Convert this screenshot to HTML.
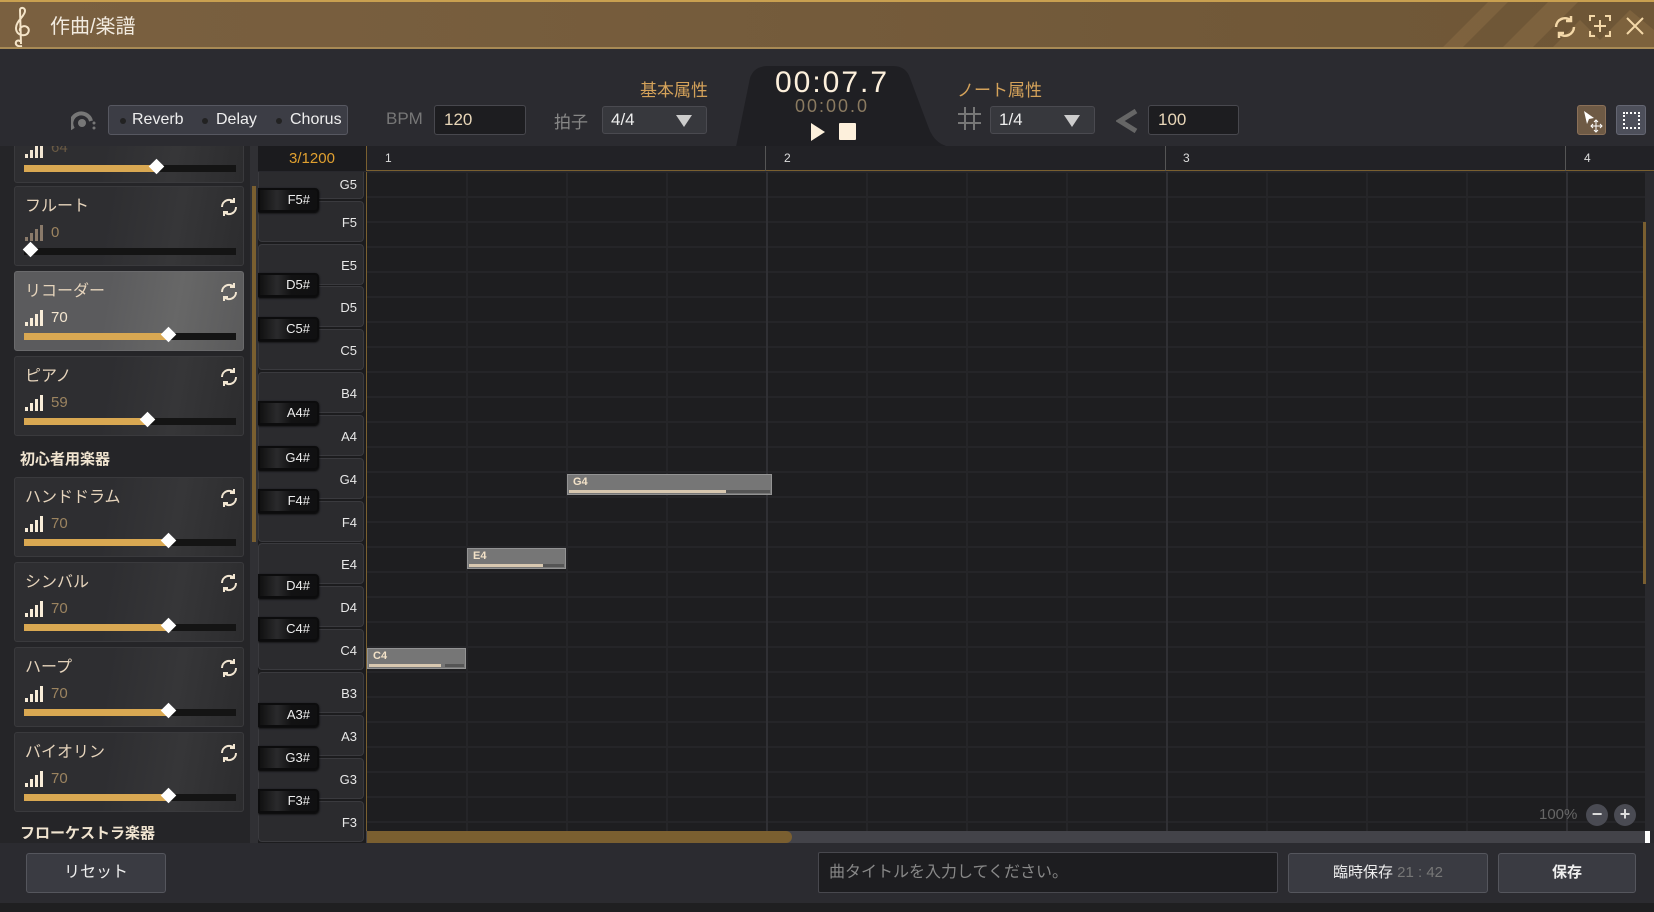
<!DOCTYPE html>
<html><head><meta charset="utf-8">
<style>
*{box-sizing:border-box;margin:0;padding:0}
body{width:1654px;height:912px;overflow:hidden;background:#28282d;font-family:"Liberation Sans","Noto Sans CJK JP",sans-serif;position:relative;color:#ddd}
.a{position:absolute}
.title{left:0;top:0;width:1654px;height:49px;background:linear-gradient(90deg,#7a6040,#735a3a 60%,#6e5636);border-top:2px solid #c9a050;border-bottom:2px solid #a88a55;overflow:hidden}
.tb{left:0;top:49px;width:1654px;height:97px;background:#2b2b30}
.lbl{font-size:17px;color:#d4a25a}
.inp{background:#1d1d20;border:1px solid #48484e;border-radius:3px;color:#e8d6b8;font-size:17px;padding-left:9px;line-height:28px}
.sel{background:#37383d;border:1px solid #4a4a50;border-radius:3px;color:#eee;font-size:17px;padding-left:8px;line-height:26px}
.tri{width:0;height:0;border-left:8px solid transparent;border-right:8px solid transparent;border-top:12px solid #ccc}
.card{left:14px;width:230px;height:80px;background:linear-gradient(100deg,#2e2e31 40%,#363638 70%,#2c2c2e);border:1px solid #3a3a3d;border-radius:3px}
.card.hl{background:linear-gradient(100deg,#5b5b5d 40%,#676767 70%,#5a5a5b);border-color:#6a6a6c}
.nm{left:10px;top:5px;font-size:16px;color:#e6d4bc}
.val{left:36px;top:37px;font-size:15px;color:#9c8460}
.hl .val{color:#f4e6d0}
.trk{left:9px;top:61px;width:212px;height:7px;background:#141414}
.fill{left:0;top:0;height:7px;background:#d9a852}
.dm{top:-4px;width:11px;height:11px;background:#fff;transform:rotate(45deg)}
.sig{left:10px;top:38px}
.rf{left:204px;top:10px}
.hdr{left:20px;font-size:15px;color:#f0e4d0;font-weight:bold}
.wk{left:258px;width:106px;background:#2b2b2e;border:1px solid #3a3a3e;border-radius:4px;color:#e8e8e8;font-size:13px;text-align:right;padding-right:6px}
.bk{left:258px;width:61px;height:24px;background:linear-gradient(90deg,#111 0,#2a2a2c 30%,#121213 55%,#101011);border:2px solid #0c0c0d;border-radius:0 4px 4px 0;color:#eee;font-size:13px;text-align:right;padding-right:7px;line-height:20px;box-shadow:0 1px 2px #000}
.note{height:21px;background:#767676;border:1px solid #939393;color:#f3e2c8;font-size:11px;font-weight:bold;padding-left:5px;line-height:15px}
.note i{position:absolute;left:1px;bottom:1px;height:3px;background:#d8c8b0}
.note b{position:absolute;right:1px;bottom:1px;height:3px;background:#555}
.btn{background:#3a3b42;border:1px solid #55565d;border-radius:3px;color:#eee;font-size:16px;text-align:center}
</style></head><body>

<svg width="0" height="0" style="position:absolute">
<defs>
<g id="sg"><rect x="0" y="12" width="3" height="4"/><rect x="5" y="8" width="3" height="8"/><rect x="10" y="4" width="3" height="12"/><rect x="15" y="0" width="3" height="16"/></g>
<g id="rfi" fill="none" stroke="#f2e6d2" stroke-width="2"><path d="M3 10a7 7 0 0 1 12-5M17 10a7 7 0 0 1-12 5"/><path d="M15 1v4h-4M5 19v-4h4"/></g>
</defs></svg>

<div class="a title">
  <svg class="a" style="left:1380px;top:-2px" width="274" height="50"><g fill="#8a6c44" opacity=".55"><polygon points="60,50 110,0 130,0 80,50"/><polygon points="120,50 170,0 200,0 150,50"/><polygon points="170,50 200,20 230,50"/><polygon points="210,50 250,10 274,30 274,50"/></g></svg>
  <svg class="a" style="left:8px;top:4px" width="26" height="42" viewBox="0 0 26 42"><path d="M14 40c-4 1-7-1-6-4 1-2 4-2 4 0M13 38L12 4c0-3 5-3 5 1 0 5-9 10-9 17 0 5 4 8 9 7 4-1 5-6 2-8-3-2-8 0-7 4" fill="none" stroke="#f4e4c8" stroke-width="2"/></svg>
  <div class="a" style="left:50px;top:8px;font-size:20px;color:#f2ebe0">作曲/楽譜</div>
  <svg class="a" style="left:1552px;top:12px" width="26" height="26" viewBox="0 0 26 26" fill="none" stroke="#f4d8a8" stroke-width="2.5"><path d="M4 13a9 9 0 0 1 15-6.5M22 13a9 9 0 0 1-15 6.5"/><path d="M19 2v5h-5M7 24v-5h5"/></svg>
  <svg class="a" style="left:1589px;top:13px" width="22" height="22" viewBox="0 0 22 22" fill="none" stroke="#f4d8a8" stroke-width="2"><path d="M1 6V1h5M16 1h5v5M21 16v5h-5M6 21H1v-5M11 5v12M5 11h12"/></svg>
  <svg class="a" style="left:1625px;top:14px" width="20" height="20" viewBox="0 0 20 20" stroke="#f4d8a8" stroke-width="2"><path d="M2 2l16 16M18 2L2 18"/></svg>
</div>

<div class="a tb"></div>
<svg class="a" style="left:728px;top:66px" width="226" height="81"><path d="M8 81 L22 12 Q26 0 40 0 H165 Q178 0 182 12 L200 60 Q207 81 226 81 Z" fill="#1f1f23"/></svg>
<div class="a" style="left:760px;top:66px;width:144px;text-align:center;font-size:30px;color:#fdf0dc;letter-spacing:2px">00:07.7</div>
<div class="a" style="left:765px;top:96px;width:134px;text-align:center;font-size:18px;color:#8a7a60;letter-spacing:2px">00:00.0</div>
<svg class="a" style="left:811px;top:123px" width="14" height="18"><polygon points="0,0 14,9 0,18" fill="#fdf0dc"/></svg>
<div class="a" style="left:839px;top:123px;width:17px;height:17px;background:#fdf0dc;border-radius:1px"></div>

<svg class="a" style="left:71px;top:111px" width="26" height="20" viewBox="0 0 26 20"><path d="M2 18A10 10 0 1 1 20 10" fill="none" stroke="#777" stroke-width="4"/><circle cx="11" cy="12" r="4" fill="#777"/><circle cx="23" cy="12" r="1.5" fill="#777"/><circle cx="23" cy="17" r="1.5" fill="#777"/></svg>
<div class="a" style="left:108px;top:105px;width:240px;height:30px;background:#3c3d45;border:1px solid #575861;border-radius:3px;font-size:16px;color:#eee;line-height:28px">
  <span class="a" style="left:11px;top:12px;width:6px;height:6px;border-radius:3px;background:#222"></span><span class="a" style="left:23px">Reverb</span>
  <span class="a" style="left:93px;top:12px;width:6px;height:6px;border-radius:3px;background:#222"></span><span class="a" style="left:107px">Delay</span>
  <span class="a" style="left:167px;top:12px;width:6px;height:6px;border-radius:3px;background:#222"></span><span class="a" style="left:181px">Chorus</span>
</div>
<div class="a" style="left:386px;top:109px;font-size:17px;color:#777">BPM</div>
<div class="a inp" style="left:434px;top:105px;width:92px;height:30px">120</div>
<div class="a" style="left:554px;top:108px;font-size:17px;color:#888">拍子</div>
<div class="a sel" style="left:602px;top:106px;width:105px;height:28px">4/4<div class="a tri" style="left:73px;top:8px"></div></div>
<div class="a lbl" style="left:640px;top:76px">基本属性</div>

<div class="a lbl" style="left:957px;top:76px">ノート属性</div>
<svg class="a" style="left:958px;top:107px" width="23" height="23" stroke="#777" stroke-width="2"><path d="M7 0v23M16 0v23M0 7h23M0 16h23"/></svg>
<div class="a sel" style="left:990px;top:106px;width:105px;height:28px">1/4<div class="a tri" style="left:73px;top:8px"></div></div>
<svg class="a" style="left:1116px;top:109px" width="22" height="24"><path d="M20 2L4 12l16 10" fill="none" stroke="#666" stroke-width="5"/></svg>
<div class="a inp" style="left:1148px;top:105px;width:91px;height:30px">100</div>
<div class="a" style="left:1577px;top:105px;width:29px;height:30px;background:#6e5a45;border:1px solid #8a7058;border-radius:3px">
  <svg class="a" style="left:3px;top:3px" width="24" height="24"><polygon points="3,2 13,9 8,10 6,15" fill="#fff"/><path d="M15 11v11M10 17h11M13 13l2-2 2 2M13 21l2 2 2-2M12 15l-2 2 2 2M19 15l2 2-2 2" fill="none" stroke="#fff" stroke-width="1"/></svg>
</div>
<div class="a" style="left:1616px;top:105px;width:30px;height:30px;background:#4d4f5a;border:1px solid #646672;border-radius:3px">
  <div class="a" style="left:6px;top:6px;width:17px;height:17px;border:2px dotted #fff"></div>
</div>

<!-- left panel -->
<div class="a" style="left:0;top:146px;width:250px;height:697px;background:#252528;overflow:hidden">
<div class="a card" style="top:-43px"><div class="a trk"><div class="a fill" style="width:132px"></div><div class="a dm" style="left:127px"></div></div>
 <svg class="a sig" width="18" height="16" style="top:38px" fill="#f2e6d2"><use href="#sg"/></svg>
 <div class="a val" style="top:35px;color:#6a5a44">64</div></div>
<div class="a card" style="top:40px"><div class="a nm">フルート</div><div class="a val">0</div>
 <svg class="a sig" width="18" height="16" fill="#8a7a6a"><use href="#sg"/></svg><svg class="a rf" width="20" height="20"><use href="#rfi"/></svg>
 <div class="a trk"><div class="a dm" style="left:1px"></div></div></div>
<div class="a card hl" style="top:125px"><div class="a nm">リコーダー</div><div class="a val">70</div><svg class="a sig" width="18" height="16" fill="#f8ecd8"><use href="#sg"/></svg><svg class="a rf" width="20" height="20"><use href="#rfi"/></svg><div class="a trk"><div class="a fill" style="width:144px"></div><div class="a dm" style="left:139px"></div></div></div>
<div class="a card" style="top:210px"><div class="a nm">ピアノ</div><div class="a val">59</div><svg class="a sig" width="18" height="16" fill="#f8ecd8"><use href="#sg"/></svg><svg class="a rf" width="20" height="20"><use href="#rfi"/></svg><div class="a trk"><div class="a fill" style="width:123px"></div><div class="a dm" style="left:118px"></div></div></div>
<div class="a hdr" style="top:302px">初心者用楽器</div>
<div class="a card" style="top:331px"><div class="a nm">ハンドドラム</div><div class="a val">70</div><svg class="a sig" width="18" height="16" fill="#f8ecd8"><use href="#sg"/></svg><svg class="a rf" width="20" height="20"><use href="#rfi"/></svg><div class="a trk"><div class="a fill" style="width:144px"></div><div class="a dm" style="left:139px"></div></div></div>
<div class="a card" style="top:416px"><div class="a nm">シンバル</div><div class="a val">70</div><svg class="a sig" width="18" height="16" fill="#f8ecd8"><use href="#sg"/></svg><svg class="a rf" width="20" height="20"><use href="#rfi"/></svg><div class="a trk"><div class="a fill" style="width:144px"></div><div class="a dm" style="left:139px"></div></div></div>
<div class="a card" style="top:501px"><div class="a nm">ハープ</div><div class="a val">70</div><svg class="a sig" width="18" height="16" fill="#f8ecd8"><use href="#sg"/></svg><svg class="a rf" width="20" height="20"><use href="#rfi"/></svg><div class="a trk"><div class="a fill" style="width:144px"></div><div class="a dm" style="left:139px"></div></div></div>
<div class="a card" style="top:586px"><div class="a nm">バイオリン</div><div class="a val">70</div><svg class="a sig" width="18" height="16" fill="#f8ecd8"><use href="#sg"/></svg><svg class="a rf" width="20" height="20"><use href="#rfi"/></svg><div class="a trk"><div class="a fill" style="width:144px"></div><div class="a dm" style="left:139px"></div></div></div>
<div class="a hdr" style="top:676px">フローケストラ楽器</div>
</div>
<div class="a" style="left:250px;top:146px;width:8px;height:697px;background:#303034"></div>
<div class="a" style="left:252px;top:186px;width:4px;height:356px;background:#7a5f30"></div>

<!-- ruler -->
<div class="a" style="left:258px;top:146px;width:1396px;height:25px;background:#222226;border-bottom:1px solid #7a6030"></div>
<div class="a" style="left:258px;top:146px;width:108px;height:25px;background:#1b1b1e;color:#e0a030;font-size:15px;text-align:center;line-height:25px">3/1200</div>
<div class="a" style="left:366px;top:146px;width:1px;height:25px;background:#7a6030"></div>
<div class="a" style="left:385px;top:151px;font-size:12px;color:#ddd">1</div>
<div class="a" style="left:765px;top:146px;width:1px;height:25px;background:#555"></div><div class="a" style="left:784px;top:151px;font-size:12px;color:#ddd">2</div>
<div class="a" style="left:1165px;top:146px;width:1px;height:25px;background:#555"></div><div class="a" style="left:1183px;top:151px;font-size:12px;color:#ddd">3</div>
<div class="a" style="left:1565px;top:146px;width:1px;height:25px;background:#555"></div><div class="a" style="left:1584px;top:151px;font-size:12px;color:#ddd">4</div>

<!-- grid -->
<div class="a" style="left:366px;top:172px;width:1279px;height:659px;background:#1e1e20;overflow:hidden;border-left:1px solid #7a6030">
<svg width="1279" height="659" style="position:absolute;left:0;top:0">
<g stroke="#252528" stroke-width="2">
<path d="M0 0H1279M0 25H1279M0 50H1279M0 75H1279M0 100H1279M0 125H1279M0 150H1279M0 175H1279M0 200H1279M0 225H1279M0 250H1279M0 275H1279M0 300H1279M0 325H1279M0 350H1279M0 375H1279M0 400H1279M0 425H1279M0 450H1279M0 475H1279M0 500H1279M0 525H1279M0 550H1279M0 575H1279M0 600H1279M0 625H1279M0 650H1279"/>
<path d="M100 0V659M200 0V659M300 0V659M500 0V659M600 0V659M700 0V659M900 0V659M1000 0V659M1100 0V659"/>
</g>
<g stroke="#303034" stroke-width="2"><path d="M400 0V659M800 0V659M1200 0V659"/></g>
</svg>
<div class="a note" style="left:0;top:476px;width:99px">C4<i style="width:72px"></i><b style="width:19px"></b></div>
<div class="a note" style="left:100px;top:376px;width:99px">E4<i style="width:75px"></i><b style="width:21px"></b></div>
<div class="a note" style="left:200px;top:302px;width:205px">G4<i style="width:158px"></i><b style="width:44px"></b></div>
<div class="a" style="left:1172px;top:634px;font-size:15px;color:#666">100%</div>
<div class="a" style="left:1219px;top:632px;width:22px;height:22px;border-radius:11px;background:#4a4b53;color:#ddd;text-align:center;font-size:18px;line-height:21px;font-weight:bold">−</div>
<div class="a" style="left:1247px;top:632px;width:22px;height:22px;border-radius:11px;background:#4a4b53;color:#ddd;text-align:center;font-size:18px;line-height:21px;font-weight:bold">+</div>
</div>
<div class="a" style="left:1645px;top:172px;width:9px;height:659px;background:#2a2a2e"></div>
<div class="a" style="left:1643px;top:222px;width:3px;height:362px;background:#7a5f30"></div>
<div class="a" style="left:366px;top:831px;width:1279px;height:12px;background:#434349"></div>
<div class="a" style="left:367px;top:831px;width:425px;height:12px;background:#7a5f30;border-radius:0 6px 6px 0"></div>
<div class="a" style="left:1645px;top:831px;width:5px;height:12px;background:#fff"></div>

<!-- piano keys -->
<div class="a" style="left:258px;top:172px;width:108px;height:671px;overflow:hidden;background:#1c1c1e">
<div class="a wk" style="left:0;top:-14px;height:41px;line-height:52px">G5</div>
<div class="a wk" style="left:0;top:29px;height:41px;line-height:41px">F5</div>
<div class="a wk" style="left:0;top:72px;height:41px;line-height:41px">E5</div>
<div class="a wk" style="left:0;top:114px;height:41px;line-height:41px">D5</div>
<div class="a wk" style="left:0;top:157px;height:41px;line-height:41px">C5</div>
<div class="a wk" style="left:0;top:200px;height:41px;line-height:41px">B4</div>
<div class="a wk" style="left:0;top:243px;height:41px;line-height:41px">A4</div>
<div class="a wk" style="left:0;top:286px;height:41px;line-height:41px">G4</div>
<div class="a wk" style="left:0;top:329px;height:41px;line-height:41px">F4</div>
<div class="a wk" style="left:0;top:371px;height:41px;line-height:41px">E4</div>
<div class="a wk" style="left:0;top:414px;height:41px;line-height:41px">D4</div>
<div class="a wk" style="left:0;top:457px;height:41px;line-height:41px">C4</div>
<div class="a wk" style="left:0;top:500px;height:41px;line-height:41px">B3</div>
<div class="a wk" style="left:0;top:543px;height:41px;line-height:41px">A3</div>
<div class="a wk" style="left:0;top:586px;height:41px;line-height:41px">G3</div>
<div class="a wk" style="left:0;top:629px;height:41px;line-height:41px">F3</div>
<div class="a bk" style="left:0;top:16px">F5#</div>
<div class="a bk" style="left:0;top:101px">D5#</div>
<div class="a bk" style="left:0;top:145px">C5#</div>
<div class="a bk" style="left:0;top:229px">A4#</div>
<div class="a bk" style="left:0;top:274px">G4#</div>
<div class="a bk" style="left:0;top:317px">F4#</div>
<div class="a bk" style="left:0;top:402px">D4#</div>
<div class="a bk" style="left:0;top:445px">C4#</div>
<div class="a bk" style="left:0;top:531px">A3#</div>
<div class="a bk" style="left:0;top:574px">G3#</div>
<div class="a bk" style="left:0;top:617px">F3#</div>
</div>

<!-- bottom bar -->
<div class="a" style="left:0;top:843px;width:1654px;height:60px;background:#2b2b30"></div>
<div class="a" style="left:0;top:903px;width:1654px;height:9px;background:#1f1f21"></div>
<div class="a btn" style="left:26px;top:853px;width:140px;height:40px;line-height:38px">リセット</div>
<div class="a" style="left:818px;top:852px;width:460px;height:41px;background:#1d1d20;border:1px solid #48484e;border-radius:2px;color:#888;font-size:16px;padding-left:10px;line-height:39px">曲タイトルを入力してください。</div>
<div class="a btn" style="left:1288px;top:853px;width:200px;height:40px;line-height:38px;font-size:15px">臨時保存 <span style="color:#777">21 : 42</span></div>
<div class="a btn" style="left:1498px;top:853px;width:138px;height:40px;line-height:38px;font-size:15px;font-weight:bold">保存</div>
</body></html>
